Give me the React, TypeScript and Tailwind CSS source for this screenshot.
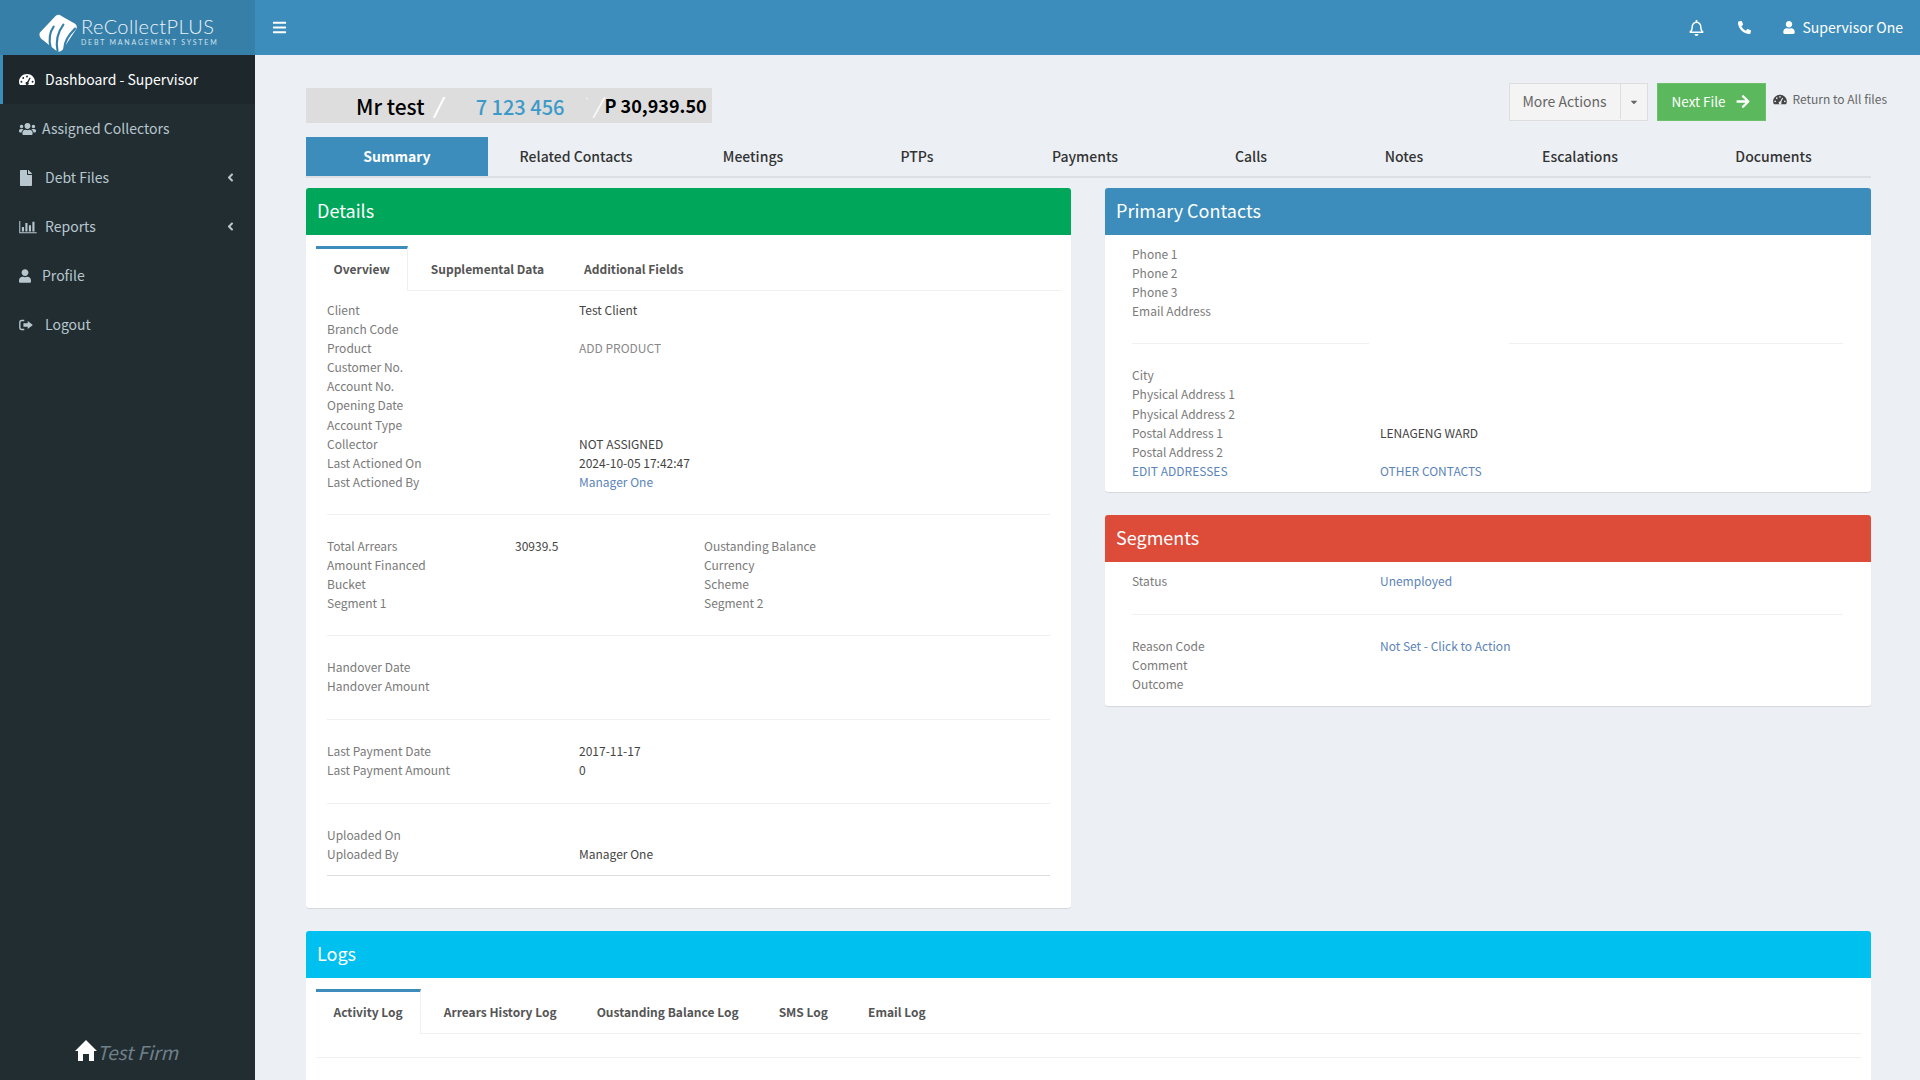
import { ReactNode } from "react";
import { FaBars, FaRegBell, FaPhoneAlt, FaUser, FaUsers, FaFile, FaAngleLeft, FaCaretDown, FaArrowRight } from "react-icons/fa";

const Dash = ({ className }: { className?: string }) => (
  <svg viewBox="0 0 20 16" className={className} fill="currentColor">
    <path fillRule="evenodd" d="M10 1C4.500 1 0 5.300 0 10.700c0 1.700.5 3.200 1.300 4.300h17.400c.8-1.100 1.300-2.600 1.300-4.300C20 5.300 15.500 1 10 1zM10 3a1.200 1.200 0 110 2.400A1.200 1.200 0 0110 3zM5.300 4.900a1.200 1.200 0 110 2.400 1.200 1.200 0 010-2.400zM3 9.600A1.200 1.200 0 113 12a1.200 1.200 0 010-2.400zm14 0a1.200 1.200 0 110 2.400 1.200 1.200 0 010-2.400zM13.300 5.500l1.300.5-2.800 5.600a2 2 0 11-1.600-.8z" />
  </svg>
);

const BarChart = ({ className }: { className?: string }) => (
  <svg viewBox="0 0 20 16" className={className} fill="currentColor">
    <path d="M0 1h1.200v13H20v1.200H0zM3 8h2.400v5H3zM7 3.500h2.400V13H7zM11 6h2.400v7H11zM15 2h2.400v11H15z" />
  </svg>
);

const SignOut = ({ className }: { className?: string }) => (
  <svg viewBox="0 0 16 14" className={className} fill="currentColor">
    <path d="M6 1v1.600H3A1.400 1.400 0 001.600 4v6A1.400 1.400 0 003 11.400h3V13H3a3 3 0 01-3-3V4a3 3 0 013-3zM10 2.200L16 7l-6 4.800V9H5V5h5z" />
  </svg>
);

const Home = ({ className }: { className?: string }) => (
  <svg viewBox="0 0 22 21" className={className} fill="currentColor">
    <path d="M11 0L22 11h-3v10h-5v-7H8v7H3V11H0z" />
  </svg>
);

const Logo = () => (
  <svg viewBox="0 0 40 40" className="w-[39px] h-[39px] shrink-0" fill="white">
    <path d="M1 19L17 2q3-2.500 6 0l14 8q3 2.500 1 6L24 37q-3 3-6 1L2 25q-2.500-3-1-6z" />
    <g fill="none" stroke="#367fa9" strokeWidth="2.200" strokeLinecap="round">
      <path d="M12 35c-2-8-2-15 3-22" />
      <path d="M19 38c-2-10 0-19 6-27" />
      <path d="M26 35c0-7 5-14 11-20" />
    </g>
  </svg>
);

const navItems = [
  { label: "Dashboard - Supervisor", icon: <Dash className="w-[16px] h-[13px]" />, textClass: "ml-[10px]", active: true },
  { label: "Assigned Collectors", icon: <FaUsers className="w-[17px] h-[16px]" />, textClass: "ml-[6px]" },
  { label: "Debt Files", icon: <FaFile className="w-[14px] h-[16px]" />, textClass: "ml-[12px]", arrow: true },
  { label: "Reports", icon: <BarChart className="w-[18px] h-[14px]" />, textClass: "ml-[8px]", arrow: true },
  { label: "Profile", icon: <FaUser className="w-[12px] h-[14px]" />, textClass: "ml-[11px]" },
  { label: "Logout", icon: <SignOut className="w-[14px] h-[12px]" />, textClass: "ml-[12px]" },
];

const topTabs = ["Summary", "Related Contacts", "Meetings", "PTPs", "Payments", "Calls", "Notes", "Escalations", "Documents"];

const Row = ({ label, value }: { label: string; value?: ReactNode }) => (
  <div className="grid grid-cols-[252px_1fr] h-[19.1px] leading-[18px]">
    <div className="text-[#7a7a7a]">{label}</div>
    <div className="text-[#444]">{value}</div>
  </div>
);

const Link = ({ children }: { children: ReactNode }) => <span className="text-[#5b84b8]">{children}</span>;

const PanelHead = ({ title, color }: { title: string; color: string }) => (
  <div className={`h-[47px] flex items-center px-[11px] pb-[2px] text-[18px] text-white rounded-t-[3px] ${color}`}>{title}</div>
);

const SubTabs = ({ tabs }: { tabs: string[] }) => (
  <div className="flex gap-[5px] h-[45px] border-b border-[#f0f0f0] text-[12px] font-bold text-[#555]">
    {tabs.map((t, i) => (
      <div
        key={t}
        className={i === 0 ? "px-[17.5px] pt-[11px] border-t-[3px] border-r border-t-[#3c8dbc] border-r-[#f0f0f0] h-[45px] bg-white" : "px-[17.5px] pt-[14px]"}
      >
        {t}
      </div>
    ))}
  </div>
);

export default function App() {
  return (
    <div className="flex h-[1080px] overflow-hidden bg-[#ecf0f5] text-[12px] font-['Noto_Sans_CJK_SC','Liberation_Sans',sans-serif]">
      {/* Sidebar */}
      <aside className="w-[255px] shrink-0 flex flex-col bg-[#222d32] text-[#b8c7ce]">
        <div className="h-[55px] bg-[#367fa9] flex items-start pl-[39px] pt-[14px]">
          <Logo />
          <div className="ml-[3px] text-white font-['Lato',sans-serif] whitespace-nowrap">
            <div className="text-[20px] leading-[22px] mt-[1px] font-light tracking-[0.4px] text-[#eaf3f8]">ReCollectPLUS</div>
            <div className="text-[7px] leading-[9px] mt-[1px] tracking-[1.8px] text-[#cfe2ee]">DEBT MANAGEMENT SYSTEM</div>
          </div>
        </div>
        <nav className="flex-1">
          {navItems.map((item) => (
            <div
              key={item.label}
              className={`h-[49px] flex items-center pl-[16px] pr-[19px] border-l-[3px] text-[14px] ${item.active ? "bg-[#1e282c] border-[#3c8dbc] text-white" : "border-transparent"}`}
            >
              {item.icon}
              <span className={item.textClass}>{item.label}</span>
              {item.arrow && <FaAngleLeft className="ml-auto w-[11px] h-[13px]" />}
            </div>
          ))}
        </nav>
        <div className="h-[40px] pl-[75px] flex items-start text-[#6f8089]">
          <Home className="w-[22px] h-[21px] text-white" />
          <span className="italic text-[19px] leading-[24px]">Test Firm</span>
        </div>
      </aside>

      <div className="flex-1 min-w-0 flex flex-col">
        {/* Top bar */}
        <header className="h-[55px] shrink-0 bg-[#3c8dbc] text-white flex items-center pl-[17px] pr-[17px]">
          <FaBars className="w-[15px] h-[15px]" />
          <FaRegBell className="ml-auto w-[15px] h-[16px] -translate-x-[2px]" />
          <FaPhoneAlt className="ml-[33px] w-[13px] h-[13px] -translate-x-[1px]" />
          <FaUser className="ml-[31px] w-[12px] h-[13px]" />
          <span className="ml-[7.5px] text-[14px]">Supervisor One</span>
        </header>

        <main className="flex-1 pl-[51px] pr-[49px] overflow-hidden">
          {/* Title row */}
          <div className="flex items-start h-[82px] pt-[28px]">
            <div className="mt-[5px] w-[406px] h-[35px] bg-[#dddddd] flex items-center pl-[50px] text-black whitespace-nowrap">
              <span className="pt-[2px] text-[21px] font-medium">Mr test</span>
              <span className="ml-[9px] text-[21px] italic font-bold text-white">/</span>
              <span className="pt-[2px] ml-[34px] text-[20px] font-medium text-[#3c9ac9]">7 123 456</span>
              <span className="ml-[21px] mb-[10px] text-[10px] text-[#f4f4f4]">'</span>
              <span className="ml-[5px] text-[21px] italic text-white">/</span>
              <span className="ml-[3px] text-[18px] font-bold">P 30,939.50</span>
            </div>
            <div className="ml-auto -mr-[16px] flex items-start">
              <div className="flex h-[38px] pb-[1px] border border-[#ddd] bg-[#f4f4f4] text-[#666] text-[14px]">
                <div className="w-[111px] flex items-center justify-center border-r border-[#ddd]">More Actions</div>
                <div className="w-[26px] flex items-center justify-center">
                  <FaCaretDown className="w-[10px] h-[10px]" />
                </div>
              </div>
              <div className="ml-[9px] w-[109px] h-[38px] pb-[1px] bg-[#5cb85c] border border-[#6cc06c] text-white text-[13.5px] flex items-center justify-center gap-[9px]">
                Next File <FaArrowRight className="w-[16px] h-[15px]" />
              </div>
              <div className="ml-[7px] mt-[7px] flex items-center text-[#666] whitespace-nowrap">
                <Dash className="w-[14px] h-[11px] text-[#444]" />
                <span className="ml-[6px]">Return to All files</span>
              </div>
            </div>
          </div>

          {/* Main tabs */}
          <div className="h-[41px] border-b-2 border-[#dcdfe4] grid grid-cols-[182px_176px_178px_150px_186px_146px_160px_192px_195px] text-[14px] font-medium text-[#333]">
            {topTabs.map((t, i) => (
              <div key={t} className={`h-[39px] pb-[1px] flex items-center justify-center ${i === 0 ? "bg-[#3c8dbc] text-white font-bold" : ""}`}>
                {t}
              </div>
            ))}
          </div>

          <div className="grid grid-cols-[765px_766px] gap-x-[34px] items-start mt-[10px]">
            {/* Details */}
            <section className="bg-white rounded-[3px] shadow-[0_1px_1px_rgba(0,0,0,0.1)]">
              <PanelHead title="Details" color="bg-[#00a65a]" />
              <div className="px-[10px] pt-[11px] pb-[32px]">
                <SubTabs tabs={["Overview", "Supplemental Data", "Additional Fields"]} />
                <div className="px-[11px] pt-[10px]">
                  <Row label="Client" value="Test Client" />
                  <Row label="Branch Code" />
                  <Row label="Product" value={<span className="text-[#888]">ADD PRODUCT</span>} />
                  <Row label="Customer No." />
                  <Row label="Account No." />
                  <Row label="Opening Date" />
                  <Row label="Account Type" />
                  <Row label="Collector" value="NOT ASSIGNED" />
                  <Row label="Last Actioned On" value="2024-10-05 17:42:47" />
                  <Row label="Last Actioned By" value={<Link>Manager One</Link>} />
                  <div className="mt-[22px] mb-[21px] border-t border-[#f0f0f0]" />
                  <div className="grid grid-cols-[188px_189px_188px_1fr] text-[#7a7a7a] leading-[19px] pb-[1px]">
                    <div>Total Arrears</div>
                    <div className="text-[#444]">30939.5</div>
                    <div>Oustanding Balance</div>
                    <div />
                    <div>Amount Financed</div>
                    <div />
                    <div>Currency</div>
                    <div />
                    <div>Bucket</div>
                    <div />
                    <div>Scheme</div>
                    <div />
                    <div>Segment 1</div>
                    <div />
                    <div>Segment 2</div>
                    <div />
                  </div>
                  <div className="my-[22px] border-t border-[#f0f0f0]" />
                  <Row label="Handover Date" />
                  <Row label="Handover Amount" />
                  <div className="my-[22.5px] border-t border-[#f0f0f0]" />
                  <Row label="Last Payment Date" value="2017-11-17" />
                  <Row label="Last Payment Amount" value="0" />
                  <div className="my-[22.5px] border-t border-[#f0f0f0]" />
                  <Row label="Uploaded On" />
                  <Row label="Uploaded By" value="Manager One" />
                  <div className="mt-[10px] border-t border-[#ddd]" />
                </div>
              </div>
            </section>

            <div className="flex flex-col gap-[23px]">
              {/* Primary Contacts */}
              <section className="bg-white rounded-[3px] shadow-[0_1px_1px_rgba(0,0,0,0.1)]">
                <PanelHead title="Primary Contacts" color="bg-[#3c8dbc]" />
                <div className="pl-[27px] pr-[28px] pt-[10px] pb-[11px]">
                  <div className="[&>div]:grid-cols-[248px_1fr]">
                    <Row label="Phone 1" />
                    <Row label="Phone 2" />
                    <Row label="Phone 3" />
                    <Row label="Email Address" />
                  </div>
                  <div className="my-[22px] flex">
                    <div className="w-[237px] border-t border-[#f0f0f0]" />
                    <div className="ml-[140px] flex-1 border-t border-[#f0f0f0]" />
                  </div>
                  <div className="[&>div]:grid-cols-[248px_1fr]">
                    <Row label="City" />
                    <Row label="Physical Address 1" />
                    <Row label="Physical Address 2" />
                    <Row label="Postal Address 1" value="LENAGENG WARD" />
                    <Row label="Postal Address 2" />
                    <div className="grid h-[19.1px] leading-[18px] text-[#5b84b8]">
                      <div>EDIT ADDRESSES</div>
                      <div>OTHER CONTACTS</div>
                    </div>
                  </div>
                </div>
              </section>

              {/* Segments */}
              <section className="bg-white rounded-[3px] shadow-[0_1px_1px_rgba(0,0,0,0.1)]">
                <PanelHead title="Segments" color="bg-[#dd4b39]" />
                <div className="pl-[27px] pr-[28px] pt-[10px] pb-[12px]">
                  <div className="[&>div]:grid-cols-[248px_1fr]">
                    <Row label="Status" value={<Link>Unemployed</Link>} />
                  </div>
                  <div className="my-[22.5px] border-t border-[#f0f0f0]" />
                  <div className="[&>div]:grid-cols-[248px_1fr]">
                    <Row label="Reason Code" value={<Link>Not Set - Click to Action</Link>} />
                    <Row label="Comment" />
                    <Row label="Outcome" />
                  </div>
                </div>
              </section>
            </div>
          </div>

          {/* Logs */}
          <section className="mt-[23px] bg-white rounded-[3px] h-[300px]">
            <PanelHead title="Logs" color="bg-[#00c0ef]" />
            <div className="px-[10px] pt-[11px]">
              <SubTabs tabs={["Activity Log", "Arrears History Log", "Oustanding Balance Log", "SMS Log", "Email Log"]} />
              <div className="mt-[23px] border-t border-[#f0f0f0]" />
            </div>
          </section>
        </main>
      </div>
    </div>
  );
}
